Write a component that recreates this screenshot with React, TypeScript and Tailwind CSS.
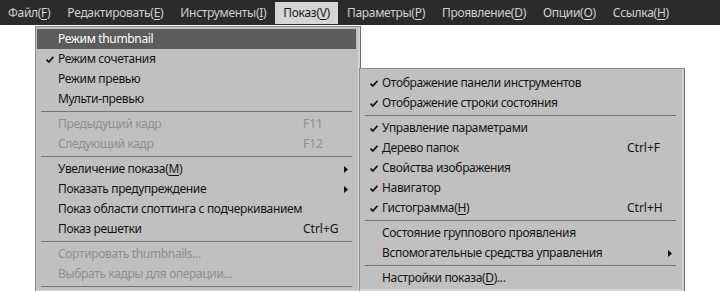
import React from 'react';

type Item =
  | { sep: true }
  | {
      label: React.ReactNode;
      checked?: boolean;
      disabled?: boolean;
      active?: boolean;
      shortcut?: string;
      sub?: boolean;
    };

const U = ({ c }: { c: string }) => <span className="underline underline-offset-2">{c}</span>;

const topItems: { label: string; key: string; open?: boolean }[] = [
  { label: 'Файл', key: 'F' },
  { label: 'Редактировать', key: 'E' },
  { label: 'Инструменты', key: 'I' },
  { label: 'Показ', key: 'V', open: true },
  { label: 'Параметры', key: 'P' },
  { label: 'Проявление', key: 'D' },
  { label: 'Опции', key: 'O' },
  { label: 'Ссылка', key: 'H' },
];

const viewMenu: Item[] = [
  { label: 'Режим thumbnail', active: true },
  { label: 'Режим сочетания', checked: true },
  { label: 'Режим превью' },
  { label: 'Мульти-превью' },
  { sep: true },
  { label: 'Предыдущий кадр', disabled: true, shortcut: 'F11' },
  { label: 'Следующий кадр', disabled: true, shortcut: 'F12' },
  { sep: true },
  { label: <>Увеличение показа(<U c="M" />)</>, sub: true },
  { label: 'Показать предупреждение', sub: true },
  { label: 'Показ области споттинга с подчеркиванием' },
  { label: 'Показ решетки', shortcut: 'Ctrl+G' },
  { sep: true },
  { label: 'Сортировать thumbnails...', disabled: true },
  { label: 'Выбрать кадры для операции...', disabled: true },
  { sep: true },
];

const panelMenu: Item[] = [
  { label: 'Отображение панели инструментов', checked: true },
  { label: 'Отображение строки состояния', checked: true },
  { sep: true },
  { label: 'Управление параметрами', checked: true },
  { label: 'Дерево папок', checked: true, shortcut: 'Ctrl+F' },
  { label: 'Свойства изображения', checked: true },
  { label: 'Навигатор', checked: true },
  { label: <>Гистограмма(<U c="H" />)</>, checked: true, shortcut: 'Ctrl+H' },
  { sep: true },
  { label: 'Состояние группового проявления' },
  { label: 'Вспомогательные средства управления', sub: true },
  { sep: true },
  { label: <>Настройки показа(<U c="D" />)...</> },
];

function Check() {
  return (
    <svg width="8" height="7" viewBox="0 0 8 7" className="block">
      <path d="M0.5 3.5 L2.8 6 L7.5 0.8" fill="none" stroke="currentColor" strokeWidth="1.8" />
    </svg>
  );
}

function Arrow() {
  return (
    <svg width="4" height="7" viewBox="0 0 4 7" className="block">
      <path d="M0 0 L4 3.5 L0 7 Z" fill="currentColor" />
    </svg>
  );
}

function Menu({ items, top = 2 }: { items: Item[]; top?: number }) {
  return (
    <div
      className={`w-[326px] bg-[#c0c0c0] border border-t-[#8c8c8c] border-l-[#8c8c8c] border-r-[#6c6c6c] border-b-[#6c6c6c] shadow-[inset_-2px_-2px_0_#d4d4d4] pb-[3px] pl-[1px] pr-[4px] ${
        top === 2 ? 'pt-[2px]' : 'pt-[4px]'
      }`}
    >
      {items.map((it, i) =>
        'sep' in it ? (
          <div key={i} className="h-[5px] flex items-center px-[4px]">
            <div className="h-px w-full bg-[#747474]" />
          </div>
        ) : (
          <div
            key={i}
            className={`relative h-[20px] flex items-center text-[12px] tracking-[-0.35px] ${
              it.active ? 'bg-[#5c5c5c] text-white' : it.disabled ? 'text-[#8f8f8f]' : 'text-[#141414]'
            }`}
          >
            <span className="w-[21px] flex justify-end pr-[4px]">{it.checked && <Check />}</span>
            <span className="whitespace-nowrap">{it.label}</span>
            {it.shortcut && <span className="absolute left-[266px] tracking-normal">{it.shortcut}</span>}
            {it.sub && (
              <span className="absolute left-[307px] text-[#101010]">
                <Arrow />
              </span>
            )}
          </div>
        ),
      )}
    </div>
  );
}

export default function App() {
  return (
    <div className="w-[720px] h-[291px] bg-white overflow-hidden" style={{ fontFamily: '"Noto Sans", "Open Sans", sans-serif' }}>
      {/* Menu bar */}
      <div className="h-[25px] bg-[#2b2b2b] flex items-start pt-[2px]">
        {topItems.map((t) => (
          <div
            key={t.key}
            className={`h-[22px] px-[8px] mr-[1px] flex items-center text-[12px] tracking-[-0.3px] whitespace-nowrap ${
              t.open ? 'bg-[#d5d5d5] text-[#1a1a1a]' : 'text-[#d0d0d0]'
            }`}
          >
            {t.label}(<U c={t.key} />)
          </div>
        ))}
      </div>

      {/* Open menus */}
      <div className="relative">
        <div className="absolute left-[35px] top-[1px]">
          <Menu items={viewMenu} />
        </div>
        <div className="absolute left-[359px] top-[43px]">
          <Menu items={panelMenu} top={4} />
        </div>
      </div>
    </div>
  );
}
